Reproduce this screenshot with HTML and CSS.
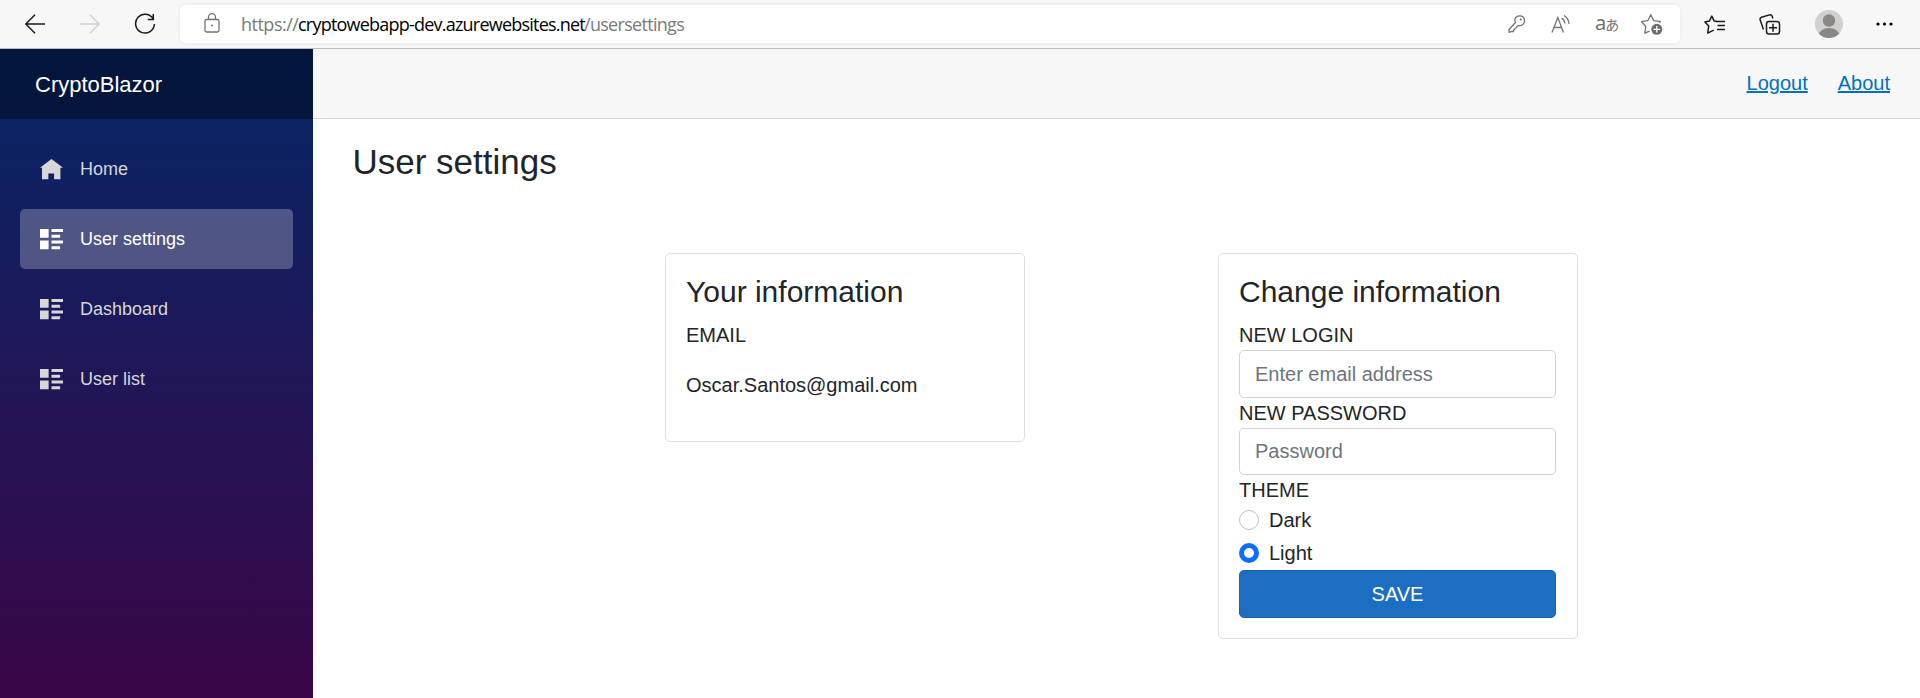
FILE: index.html
```html
<!DOCTYPE html>
<html lang="en">
<head>
<meta charset="utf-8">
<title>CryptoBlazor</title>
<link rel="stylesheet" href="styles.css">
</head>
<body>
<header class="browser">
  <div class="nav-buttons">
    <svg class="ico" width="20" height="20" viewBox="0 0 20 20"><path d="M20 10H1M10 .8L.8 10l9.200 9.200"/></svg>
    <svg class="ico disabled" width="20" height="20" viewBox="0 0 20 20"><path d="M0 10h19M10 .8l9.200 9.200-9.200 9.200"/></svg>
    <svg class="ico" width="22" height="22" viewBox="0 0 22 22"><path d="M19.300 6.200A9.400 9.400 0 1 0 20.400 11M19.300 1v5.500h-5.500"/></svg>
  </div>
  <div class="address">
    <svg class="ico gray lock" width="16" height="20" viewBox="0 0 16 20"><rect x="1" y="6.500" width="14" height="12.500" rx="1.800"/><path d="M4.500 6.500V4.200a3.500 3.500 0 0 1 7 0v2.300"/><circle class="fill" cx="8" cy="12.600" r="1"/></svg>
    <div class="url"><span class="u1">https://</span><span class="u2">cryptowebapp-dev.azurewebsites.net</span><span class="u3">/usersettings</span></div>
    <div class="address-icons">
      <svg class="ico gray" width="20" height="20" viewBox="0 0 20 20"><path d="M8.300 8.800C6.800 4.500 9.200 1.800 12.500 1.800c3.200 0 5 2.200 5 4.900 0 3.500-2.700 5.700-6.300 4.700L6.500 16.200v1.300H4.500L2 18.300V15.500z" stroke-linejoin="round"/><circle class="fill" cx="13.800" cy="5.500" r="1"/></svg>
      <svg class="ico gray" width="22" height="20" viewBox="0 0 22 20"><path d="M2 18.500L7.800 3.500l5.700 15M4 13.500h7.600M11.500 4q3 1.500 3.300 5.500M14 1.500q4.800 3 5 8.500"/></svg>
      <div class="translate">a<span>あ</span></div>
      <svg class="ico gray" width="24" height="22" viewBox="0 0 24 22"><path d="M9.500 18.200l-4.700 2 1-6.700L1.500 8.700l6.300-1 3-6 3 6 6.500 1-1 1.200" stroke-linejoin="round"/><circle class="fill" cx="16.800" cy="16.300" r="5.500"/><path class="plus" d="M16.800 13v6.600M13.500 16.300h6.600"/></svg>
    </div>
  </div>
  <div class="tools">
    <svg class="ico" width="22" height="21" viewBox="0 0 22 21"><path d="M13 7.500l-2.800-.4-2.400-5-2.500 5-4.400.8 3.800 4-1 7.200 6-3" stroke-linejoin="round"/><path d="M12.500 7.500H21M13.500 11.500H21M13 15.500h8"/></svg>
    <svg class="ico" width="22" height="21" viewBox="0 0 22 21"><rect x="7.500" y="7.500" width="13" height="12.500" rx="2.500"/><path d="M14 9.800v8M10 13.800h8M4.500 15.500L1.200 6q-.6-2 1.300-2.700l8-2.400q2-.5 2.700 1.400l.6 2.200"/></svg>
    <svg class="avatar" width="28" height="28" viewBox="0 0 28 28"><clipPath id="face"><circle cx="14" cy="14" r="14"/></clipPath><g clip-path="url(#face)"><rect width="28" height="28" fill="#d2d0ce"/><circle cx="14" cy="10.500" r="6.200" fill="#8a8886"/><ellipse cx="14" cy="26" rx="10.500" ry="8" fill="#8a8886"/></g></svg>
    <svg width="18" height="4" viewBox="0 0 18 4"><circle cx="2" cy="2" r="1.600"/><circle cx="8.500" cy="2" r="1.600"/><circle cx="15" cy="2" r="1.600"/></svg>
  </div>
</header>
<div class="page">
  <aside class="sidebar">
    <div class="brand">CryptoBlazor</div>
    <nav class="menu">
      <a class="item"><svg width="23" height="23" viewBox="0 0 8 8"><path d="M4 0l-4 3h.7v4h2.200v-2h2v2h2.200v-4h.9l-4-3z"/></svg>Home</a>
      <a class="item active"><svg width="23" height="23" viewBox="0 0 8 8"><path d="M0 0v3h3v-3h-3zm4 0v1h4v-1h-4zm0 2v1h3v-1h-3zm-4 2v3h3v-3h-3zm4 0v1h4v-1h-4zm0 2v1h3v-1h-3z"/></svg>User settings</a>
      <a class="item"><svg width="23" height="23" viewBox="0 0 8 8"><path d="M0 0v3h3v-3h-3zm4 0v1h4v-1h-4zm0 2v1h3v-1h-3zm-4 2v3h3v-3h-3zm4 0v1h4v-1h-4zm0 2v1h3v-1h-3z"/></svg>Dashboard</a>
      <a class="item"><svg width="23" height="23" viewBox="0 0 8 8"><path d="M0 0v3h3v-3h-3zm4 0v1h4v-1h-4zm0 2v1h3v-1h-3zm-4 2v3h3v-3h-3zm4 0v1h4v-1h-4zm0 2v1h3v-1h-3z"/></svg>User list</a>
    </nav>
  </aside>
  <main class="main">
    <div class="top-row"><a href="#">Logout</a><a href="#">About</a></div>
    <h3 class="title">User settings</h3>
    <div class="cards">
      <section class="card info">
        <h4>Your information</h4>
        <div class="label">EMAIL</div>
        <p class="email">Oscar.Santos@gmail.com</p>
      </section>
      <section class="card">
        <h4>Change information</h4>
        <div class="label">NEW LOGIN</div>
        <input class="field" type="text" placeholder="Enter email address">
        <div class="label">NEW PASSWORD</div>
        <input class="field" type="password" placeholder="Password">
        <div class="label">THEME</div>
        <label class="check"><input type="radio" name="theme">Dark</label>
        <label class="check"><input type="radio" name="theme" checked>Light</label>
        <button class="save">SAVE</button>
      </section>
    </div>
  </main>
</div>
</body>
</html>
```
FILE: styles.css
```css
* { box-sizing: border-box; }
body {
  margin: 0;
  height: 698px;
  overflow: hidden;
  display: flex;
  flex-direction: column;
  font: 20px/30px "Liberation Sans", Arial, sans-serif;
  color: #212529;
  background: #fff;
}
.browser {
  height: 49px;
  flex: none;
  display: flex;
  align-items: center;
  background: #f7f7f7;
  border-bottom: 1px solid #bcbebc;
}
.ico { fill: none; stroke: #1b1b1b; stroke-width: 1.5; flex: none; }
.ico.disabled { stroke: #d0d0d0; }
.ico.gray { stroke: #737373; stroke-width: 1.3; }
.ico .fill { fill: #6c6c6c; stroke: none; }
.ico .plus { stroke: #fff; }
.nav-buttons { width: 180px; padding: 0 24px 1px 25px; display: flex; align-items: center; justify-content: space-between; }
.address {
  width: 1500px;
  height: 38px;
  display: flex;
  align-items: center;
  padding: 0 16px 0 24px;
  border-radius: 5px;
  background: #fff;
  box-shadow: 0 0 4px rgba(0, 0, 0, .08);
}
.lock { margin: 0 21px 2px 0; }
.url {
  display: flex;
  font: 18px/24px "Open Sans", "Noto Sans", sans-serif;
  color: #7a7a7a;
}
.u1 { width: 57px; letter-spacing: -.5px; }
.u2 { width: 286px; color: #000; letter-spacing: -.78px; white-space: nowrap; }
.u3 { letter-spacing: -.7px; }
.address-icons { margin-left: auto; display: flex; align-items: center; gap: 23px; }
.translate { display: flex; width: 22px; font: 20px/24px "Noto Sans", sans-serif; color: #737373; }
.translate span { font: 14px/26px "Noto Sans CJK JP", sans-serif; margin-left: -1px; }
.tools { flex: 1; display: flex; align-items: center; justify-content: space-between; padding: 0 26px 0 24px; }
.page { flex: 1; display: flex; min-height: 0; }
.sidebar { width: 313px; flex: none; background: linear-gradient(#052767, #3a0647); }
.brand {
  height: 70px;
  padding-left: 35px;
  font-size: 22px;
  line-height: 72px;
  color: #fff;
  background: rgba(0, 0, 0, .4);
}
.menu { display: flex; flex-direction: column; gap: 10px; padding: 20px; }
.item {
  height: 60px;
  display: flex;
  align-items: center;
  gap: 17px;
  padding-left: 20px;
  border-radius: 5px;
  font-size: 18px;
  color: #d7d7d7;
}
.item svg { fill: currentColor; margin-top: 2px; }
.item.active { color: #fff; background: rgba(255, 255, 255, .25); }
.main { flex: 1; }
.top-row {
  height: 70px;
  display: flex;
  align-items: center;
  justify-content: flex-end;
  gap: 30px;
  padding: 0 30px 2px 0;
  background: #f7f7f7;
  border-bottom: 1px solid #d6d5d5;
}
.top-row a { color: #0071c1; }
.title { margin: 22px 0 0 39.5px; font-size: 35px; line-height: 42px; font-weight: 400; }
.cards { display: flex; align-items: flex-start; gap: 193px; margin: 70px 0 0 352px; }
.card { width: 360px; padding: 20px 21px 20px 20px; border: 1px solid #dfdfdf; border-radius: 5px; }
.card.info { padding-bottom: 21px; }
.card h4 { margin: 0 0 10px; font-size: 30px; line-height: 36px; font-weight: 400; }
.email { margin: 20px 0; }
.field {
  display: block;
  width: 100%;
  height: 47.5px;
  padding: 1px 15px 0;
  border: 1px solid #ced4da;
  border-radius: 5px;
  font: inherit;
  background: #fff;
}
.field::placeholder { color: #6c757d; opacity: 1; }
.check { display: flex; align-items: center; gap: 10px; height: 30px; margin-bottom: 2.5px; }
.check input { appearance: none; width: 20px; height: 20px; margin: 0; border: 1px solid #bfbfbf; border-radius: 50%; background: #fff; }
.check input:checked { border: 5px solid #0d6efd; }
.save {
  display: block;
  width: 100%;
  height: 47.5px;
  padding: 0;
  border: 1px solid #1861ac;
  border-radius: 5px;
  font: inherit;
  color: #fff;
  background: #1b6ec2;
}
```
